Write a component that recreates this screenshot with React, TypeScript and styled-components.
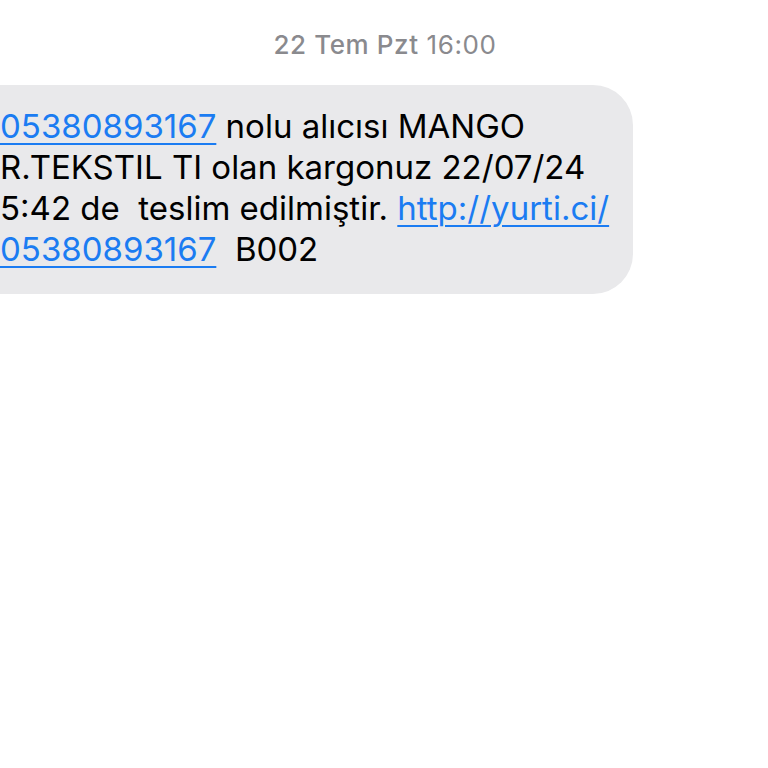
import React from "react";
import styled, { createGlobalStyle } from "styled-components";

const Global = createGlobalStyle`
  html, body {
    margin: 0;
    padding: 0;
    background: #ffffff;
    overflow: hidden;
  }
  body {
    font-family: Inter, "Noto Sans", "Liberation Sans", sans-serif;
    -webkit-font-smoothing: antialiased;
  }
`;

const Thread = styled.div`
  width: 768px;
  height: 768px;
  display: flex;
  flex-direction: column;
  overflow: hidden;
`;

const Stamp = styled.div`
  align-self: center;
  margin: 29px 0 0 2px;
  font-size: 26px;
  line-height: 32px;
  color: #8a8a8e;
  letter-spacing: 0.6px;
`;

const StampDay = styled.span`
  font-weight: 500;
`;

const Bubble = styled.div`
  margin: 24px 0 0 -40px;
  width: 673px;
  box-sizing: border-box;
  padding: 21px 20px 24px 40px;
  background: #e9e9eb;
  border-radius: 40px;
  color: #000000;
  font-size: 33px;
  line-height: 41px;
  white-space: pre;
`;

const Line = styled.div`
  display: block;
`;

const Link = styled.a`
  color: #1b7cf2;
  text-decoration: underline;
  text-decoration-thickness: 2px;
  text-underline-offset: 5px;
`;

const App = () => {
  return (
    <Thread>
      <Global />
      <Stamp>
        <StampDay>22 Tem Pzt</StampDay> 16:00
      </Stamp>
      <Bubble>
        <Line>
          <Link href="#">05380893167</Link> nolu alıcısı MANGO
        </Line>
        <Line>R.TEKSTIL TI olan kargonuz 22/07/24</Line>
        <Line>
          5:42 de  teslim edilmiştir. <Link href="#">http://yurti.ci/</Link>
        </Line>
        <Line>
          <Link href="#">05380893167</Link>  B002
        </Line>
      </Bubble>
    </Thread>
  );
};

export default App;
